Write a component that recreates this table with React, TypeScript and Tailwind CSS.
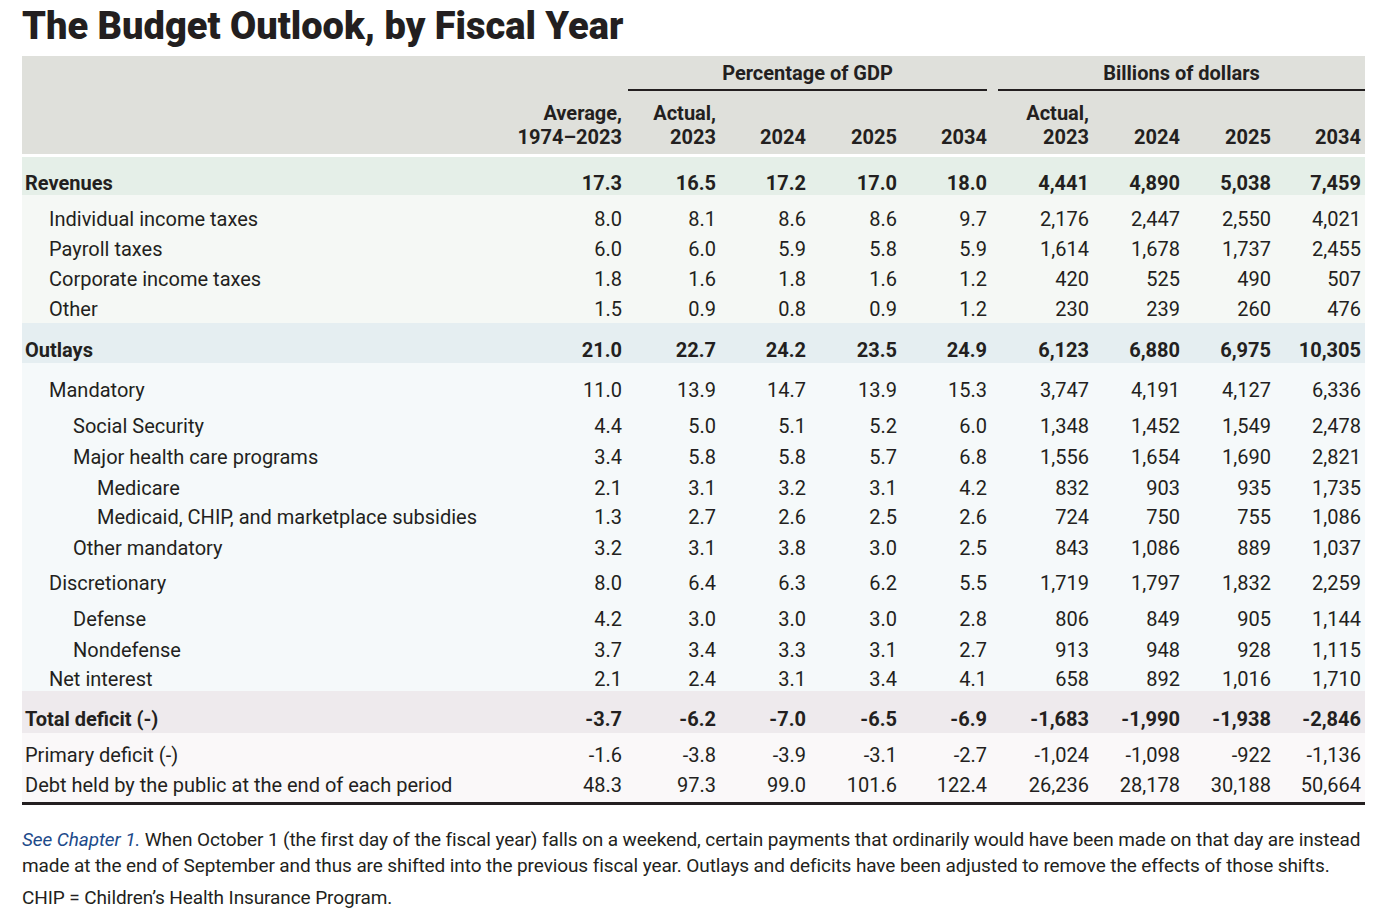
import React from "react";

type Row = {
  label: string;
  values: string[];
  indent: string;
  bold?: boolean;
  extra?: string;
};

const COLS =
  "grid grid-cols-[490px_110px_94px_90px_91px_90px_102px_91px_91px_90px_4px]";

const revenues: Row = {
  label: "Revenues",
  values: ["17.3", "16.5", "17.2", "17.0", "18.0", "4,441", "4,890", "5,038", "7,459"],
  indent: "pl-[3px]",
  bold: true,
};

const revenueRows: Row[] = [
  { label: "Individual income taxes", values: ["8.0", "8.1", "8.6", "8.6", "9.7", "2,176", "2,447", "2,550", "4,021"], indent: "pl-[27px]" },
  { label: "Payroll taxes", values: ["6.0", "6.0", "5.9", "5.8", "5.9", "1,614", "1,678", "1,737", "2,455"], indent: "pl-[27px]" },
  { label: "Corporate income taxes", values: ["1.8", "1.6", "1.8", "1.6", "1.2", "420", "525", "490", "507"], indent: "pl-[27px]" },
  { label: "Other", values: ["1.5", "0.9", "0.8", "0.9", "1.2", "230", "239", "260", "476"], indent: "pl-[27px]" },
];

const outlays: Row = {
  label: "Outlays",
  values: ["21.0", "22.7", "24.2", "23.5", "24.9", "6,123", "6,880", "6,975", "10,305"],
  indent: "pl-[3px]",
  bold: true,
};

const outlayRows: Row[] = [
  { label: "Mandatory", values: ["11.0", "13.9", "14.7", "13.9", "15.3", "3,747", "4,191", "4,127", "6,336"], indent: "pl-[27px]" },
  { label: "Social Security", values: ["4.4", "5.0", "5.1", "5.2", "6.0", "1,348", "1,452", "1,549", "2,478"], indent: "pl-[51px]", extra: "mt-[6px]" },
  { label: "Major health care programs", values: ["3.4", "5.8", "5.8", "5.7", "6.8", "1,556", "1,654", "1,690", "2,821"], indent: "pl-[51px]", extra: "mt-[1px]" },
  { label: "Medicare", values: ["2.1", "3.1", "3.2", "3.1", "4.2", "832", "903", "935", "1,735"], indent: "pl-[75px]", extra: "mt-[1px]" },
  { label: "Medicaid, CHIP, and marketplace subsidies", values: ["1.3", "2.7", "2.6", "2.5", "2.6", "724", "750", "755", "1,086"], indent: "pl-[75px]", extra: "-mt-[1px]" },
  { label: "Other mandatory", values: ["3.2", "3.1", "3.8", "3.0", "2.5", "843", "1,086", "889", "1,037"], indent: "pl-[51px]", extra: "mt-[1px]" },
  { label: "Discretionary", values: ["8.0", "6.4", "6.3", "6.2", "5.5", "1,719", "1,797", "1,832", "2,259"], indent: "pl-[27px]", extra: "mt-[5px]" },
  { label: "Defense", values: ["4.2", "3.0", "3.0", "3.0", "2.8", "806", "849", "905", "1,144"], indent: "pl-[51px]", extra: "mt-[6px]" },
  { label: "Nondefense", values: ["3.7", "3.4", "3.3", "3.1", "2.7", "913", "948", "928", "1,115"], indent: "pl-[51px]", extra: "mt-[1px]" },
  { label: "Net interest", values: ["2.1", "2.4", "3.1", "3.4", "4.1", "658", "892", "1,016", "1,710"], indent: "pl-[27px]", extra: "-mt-[1px]" },
];

const deficit: Row = {
  label: "Total deficit (-)",
  values: ["-3.7", "-6.2", "-7.0", "-6.5", "-6.9", "-1,683", "-1,990", "-1,938", "-2,846"],
  indent: "pl-[3px]",
  bold: true,
};

const deficitRows: Row[] = [
  { label: "Primary deficit (-)", values: ["-1.6", "-3.8", "-3.9", "-3.1", "-2.7", "-1,024", "-1,098", "-922", "-1,136"], indent: "pl-[3px]" },
  { label: "Debt held by the public at the end of each period", values: ["48.3", "97.3", "99.0", "101.6", "122.4", "26,236", "28,178", "30,188", "50,664"], indent: "pl-[3px]" },
];

function TableRow({ row }: { row: Row }) {
  return (
    <div
      className={`${COLS} h-[30px] items-center leading-[30px] ${row.bold ? "font-bold" : "font-normal"} ${row.extra ?? ""}`}
    >
      <div className={`${row.indent} whitespace-nowrap`}>{row.label}</div>
      {row.values.map((v, i) => (
        <div key={i} className="text-right whitespace-nowrap">
          {v}
        </div>
      ))}
      <div />
    </div>
  );
}

function App() {
  const yearHeads = [
    ["Average,", "1974–2023"],
    ["Actual,", "2023"],
    ["2024"],
    ["2025"],
    ["2034"],
    ["Actual,", "2023"],
    ["2024"],
    ["2025"],
    ["2034"],
  ];

  return (
    <div
      className="w-[1382px] h-[918px] bg-white text-[#231f20] overflow-hidden"
      style={{ fontFamily: "Roboto, 'Liberation Sans', sans-serif" }}
    >
      <h1 className="pl-[22px] pt-[4px] h-[56px] text-[38px] leading-[44px] font-black tracking-[0px]">
        The Budget Outlook, by Fiscal Year
      </h1>

      <div className="ml-[22px] w-[1343px] text-[20px]">
        {/* header */}
        <div className="bg-[#dfe0db] h-[98px] font-bold">
          <div className={`${COLS} pt-[5px] leading-[24px]`}>
            <div />
            <div />
            <div className="col-span-4 ml-[6px] pb-[4px] border-b-2 border-[#231f20] text-center">
              Percentage of GDP
            </div>
            <div className="col-span-5 ml-[11px] pb-[4px] border-b-2 border-[#231f20] text-center">
              Billions of dollars
            </div>
          </div>
          <div className={`${COLS} h-[59px] items-end leading-[24px]`}>
            <div />
            {yearHeads.map((h, i) => (
              <div key={i} className="text-right whitespace-nowrap pb-[1px]">
                {h.map((t, j) => (
                  <div key={j}>{t}</div>
                ))}
              </div>
            ))}
            <div />
          </div>
        </div>

        {/* revenues */}
        <div className="mt-[3px] bg-[#e5efe8] h-[38px] pt-[11px]">
          <TableRow row={revenues} />
        </div>
        <div className="bg-[#f5f8f5] h-[128px] pt-[9px]">
          {revenueRows.map((r) => (
            <TableRow key={r.label} row={r} />
          ))}
        </div>

        {/* outlays */}
        <div className="bg-[#e5eef1] h-[40px] pt-[12px]">
          <TableRow row={outlays} />
        </div>
        <div className="bg-[#f5f9fa] h-[328px] pt-[12px]">
          {outlayRows.map((r) => (
            <TableRow key={r.label} row={r} />
          ))}
        </div>

        {/* deficit */}
        <div className="bg-[#eeeaed] h-[42px] pt-[13px]">
          <TableRow row={deficit} />
        </div>
        <div className="bg-[#faf8f9] h-[72px] pt-[7px] border-b-[3px] border-[#231f20]">
          {deficitRows.map((r) => (
            <TableRow key={r.label} row={r} />
          ))}
        </div>
      </div>

      {/* notes */}
      <div className="pl-[22px] pt-[22px] text-[19px] leading-[26px] whitespace-nowrap tracking-[-0.1px]">
        <p>
          <span className="italic text-[#1c4a8a]">See Chapter 1.</span> When
          October 1 (the first day of the fiscal year) falls on a weekend,
          certain payments that ordinarily would have been made on that day are
          instead
          <br />
          made at the end of September and thus are shifted into the previous
          fiscal year. Outlays and deficits have been adjusted to remove the
          effects of those shifts.
        </p>
        <p className="mt-[6px]">CHIP = Children’s Health Insurance Program.</p>
      </div>
    </div>
  );
}

export default App;
